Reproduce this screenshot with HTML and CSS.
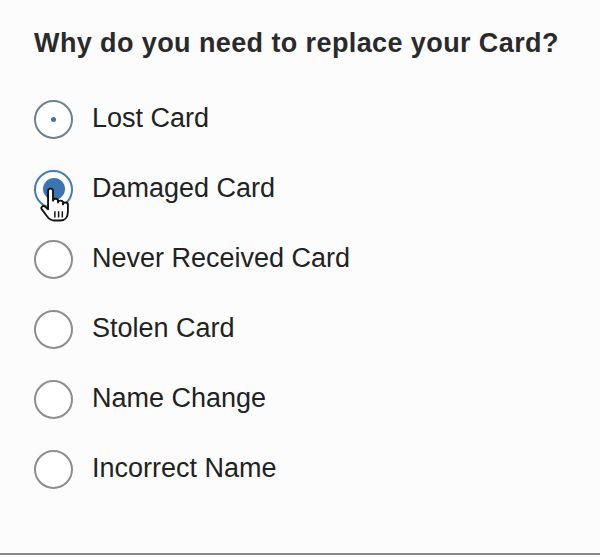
FILE: index.html
```html
<!DOCTYPE html>
<html lang="en">

<head>
    <meta charset="UTF-8">
    <meta name="viewport" content="width=device-width, initial-scale=1.0">
    <title>Replace Card</title>
    <link rel="stylesheet" href="styles.css">
</head>

<body>
    <div class="panel">
        <h3 class="question">Why do you need to replace your Card?</h3>
        <div class="options">
            <label class="option focused">
                <span class="radio"></span>
                <span class="label-text">Lost Card</span>
            </label>
            <label class="option checked">
                <span class="radio"></span>
                <span class="label-text">Damaged Card</span>
                <svg class="pointer" width="33" height="36" viewBox="0 0 26 29">
                    <path d="M7 13 L7 3 C7 0.8 11 0.8 11 3 L11 11 C11 9 15 9 15 11 L15 12.5 C15 10.5 19 10.5 19 12.5 L19 14 C19 12 23 12 23 14 L23 20 C23 24 21 27 17 27 L12 27 C9.5 27 8 26 6.5 24 L2 18 C0.8 16.3 2.8 14.5 4.5 15.8 L7 18 Z"
                        fill="#fff" stroke="#111" stroke-width="1.5" stroke-linejoin="round" />
                    <path d="M12.5 19.5 V24.5 M15.5 19.5 V24.5 M18.5 19.5 V24.5" stroke="#111" stroke-width="1.2" />
                </svg>
            </label>
            <label class="option">
                <span class="radio"></span>
                <span class="label-text">Never Received Card</span>
            </label>
            <label class="option">
                <span class="radio"></span>
                <span class="label-text">Stolen Card</span>
            </label>
            <label class="option">
                <span class="radio"></span>
                <span class="label-text">Name Change</span>
            </label>
            <label class="option">
                <span class="radio"></span>
                <span class="label-text">Incorrect Name</span>
            </label>
        </div>
    </div>
</body>

</html>
```

FILE: styles.css
```css
body {
    margin: 0;
    font-family: "Liberation Sans", Arial, Helvetica, sans-serif;
    background-color: #fdfcfd;
}

.panel {
    height: 555px;
    padding: 0 34px;
    box-sizing: border-box;
    border-bottom: 2px solid #8a8a8a;
}

/* Question title */
.question {
    margin: 0;
    padding-top: 27px;
    font-size: 27px;
    line-height: 32px;
    font-weight: bold;
    letter-spacing: 0.4px;
    color: #2a2a2a;
}

.options {
    display: flex;
    flex-direction: column;
    padding-top: 25px;
}

.option {
    position: relative;
    display: flex;
    align-items: center;
    height: 70px;
    gap: 19px;
}

.radio {
    width: 39px;
    height: 39px;
    box-sizing: border-box;
    border: 2px solid #8d8d8d;
    border-radius: 50%;
    display: flex;
    align-items: center;
    justify-content: center;
    background-color: #fff;
}

.label-text {
    font-size: 27px;
    color: #222;
    margin-top: -2px;
}

/* Focused (empty dot) */
.focused .radio {
    border-color: #6e7f8e;
}

.focused .radio::after {
    content: "";
    width: 5px;
    height: 5px;
    border-radius: 50%;
    background-color: #3a73b0;
}

/* Checked */
.checked .radio {
    border-color: #3f7cbf;
}

.checked .radio::after {
    content: "";
    width: 22px;
    height: 22px;
    border-radius: 50%;
    background-color: #3c74b4;
}

/* The mouse hand over the checked radio */
.pointer {
    position: absolute;
    left: 5px;
    top: 33px;
}
```
